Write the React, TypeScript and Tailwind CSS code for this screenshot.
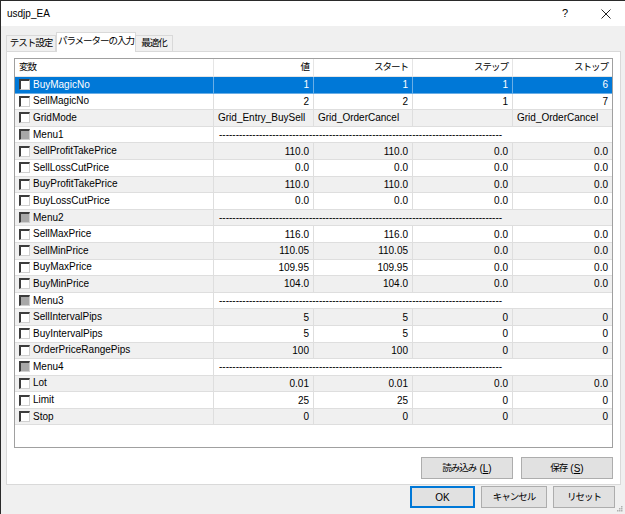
import React from "react";

type Row = {
  name: string;
  vals?: string[];
  menu?: boolean;
  text?: boolean;
};

const rows: Row[] = [
  { name: "BuyMagicNo", vals: ["1", "1", "1", "6"] },
  { name: "SellMagicNo", vals: ["2", "2", "1", "7"] },
  { name: "GridMode", vals: ["Grid_Entry_BuySell", "Grid_OrderCancel", "", "Grid_OrderCancel"], text: true },
  { name: "Menu1", menu: true },
  { name: "SellProfitTakePrice", vals: ["110.0", "110.0", "0.0", "0.0"] },
  { name: "SellLossCutPrice", vals: ["0.0", "0.0", "0.0", "0.0"] },
  { name: "BuyProfitTakePrice", vals: ["110.0", "110.0", "0.0", "0.0"] },
  { name: "BuyLossCutPrice", vals: ["0.0", "0.0", "0.0", "0.0"] },
  { name: "Menu2", menu: true },
  { name: "SellMaxPrice", vals: ["116.0", "116.0", "0.0", "0.0"] },
  { name: "SellMinPrice", vals: ["110.05", "110.05", "0.0", "0.0"] },
  { name: "BuyMaxPrice", vals: ["109.95", "109.95", "0.0", "0.0"] },
  { name: "BuyMinPrice", vals: ["104.0", "104.0", "0.0", "0.0"] },
  { name: "Menu3", menu: true },
  { name: "SellIntervalPips", vals: ["5", "5", "0", "0"] },
  { name: "BuyIntervalPips", vals: ["5", "5", "0", "0"] },
  { name: "OrderPriceRangePips", vals: ["100", "100", "0", "0"] },
  { name: "Menu4", menu: true },
  { name: "Lot", vals: ["0.01", "0.01", "0.0", "0.0"] },
  { name: "Limit", vals: ["25", "25", "0", "0"] },
  { name: "Stop", vals: ["0", "0", "0", "0"] },
];

const DASHES = "-".repeat(85);

function Check({ menu }: { menu?: boolean }) {
  return (
    <div
      className={
        "w-[11px] h-[11px] shrink-0 box-border border-t-2 border-l-2 border-t-[#3c3c3c] border-l-[#3c3c3c] border-b border-r border-b-[#d0d0d0] border-r-[#d0d0d0] " +
        (menu ? "bg-[#a8a8a8]" : "bg-white")
      }
    />
  );
}

function Jp({ children }: { children: React.ReactNode }) {
  return <span className="text-[9.5px] tracking-[-1px]">{children}</span>;
}

function Btn({ children, w, def }: { children: React.ReactNode; w: string; def?: boolean }) {
  return (
    <div
      className={
        "h-[22px] flex items-center justify-center bg-[#e1e1e1] box-border " +
        w +
        (def ? " border-2 border-[#0078d7]" : " border border-[#adadad]")
      }
    >
      {children}
    </div>
  );
}

export default function App() {
  return (
    <div
      className="w-[625px] h-[514px] bg-[#2a2a2a] overflow-hidden text-black"
      style={{ fontFamily: '"Liberation Sans", "Noto Sans CJK JP", sans-serif' }}
    >
      <div className="ml-[1px] mt-[1px] w-[624px] h-[513px] bg-[#f0f0f0] flex flex-col text-[10px]">
        {/* title bar */}
        <div className="h-[25px] bg-white flex items-center shrink-0">
          <span className="ml-[6px] text-[10px]">usdjp_EA</span>
          <span className="ml-auto text-[11px] mr-[33px]">?</span>
          <svg width="10" height="10" viewBox="0 0 10 10" className="mr-[14px]">
            <path d="M0.5 0.5 L9.5 9.5 M9.5 0.5 L0.5 9.5" stroke="#222" strokeWidth="1" />
          </svg>
        </div>

        {/* tabs */}
        <div className="flex items-end pl-[5px] mt-[6px] h-[19px] shrink-0 relative z-10">
          <div className="h-[16px] w-[50px] border border-b-0 border-[#d9d9d9] bg-[#f0f0f0] flex items-center justify-center">
            <Jp>テスト設定</Jp>
          </div>
          <div className="h-[20px] w-[80px] -mb-px border border-b-0 border-[#d9d9d9] bg-white flex items-center justify-center pb-[2px]">
            <Jp>パラメーターの入力</Jp>
          </div>
          <div className="h-[16px] w-[37px] border border-b-0 border-l-0 border-[#d9d9d9] bg-[#f0f0f0] flex items-center justify-center">
            <Jp>最適化</Jp>
          </div>
        </div>

        {/* panel */}
        <div className="ml-[5px] w-[615px] h-[434px] bg-white border border-[#d9d9d9] box-border pt-[6px] pl-[7px] flex flex-col">
          <div className="w-[599px] h-[390px] border border-[#a0a0a0] box-border bg-white overflow-hidden">
            {/* header */}
            <div className="grid grid-cols-[198px_100px_99px_100px_100px] h-[18px] border-b border-[#e5e5e5] box-border">
              <div className="flex items-center pl-[4px]">
                <Jp>変数</Jp>
              </div>
              {["値", "スタート", "ステップ", "ストップ"].map((h) => (
                <div key={h} className="flex items-center justify-end pr-[4px] border-l border-[#e5e5e5]">
                  <Jp>{h}</Jp>
                </div>
              ))}
            </div>
            {rows.map((r, i) => {
              const sel = i === 0;
              const gray = i % 2 === 0;
              const bg = sel ? "bg-[#0078d7] text-white" : gray ? "bg-[#f0f0f0]" : "bg-white";
              const line = sel ? "border-[#6aaee6]" : "border-[#dedede]";
              return (
                <div
                  key={r.name}
                  className={"grid grid-cols-[198px_100px_99px_100px_100px] h-[16.6px] box-border border-b " + line + " " + bg}
                >
                  <div className="flex items-center pl-[4px] gap-[3px]">
                    <Check menu={r.menu} />
                    <span className="leading-none">{r.name}</span>
                  </div>
                  {r.menu ? (
                    <div className={"col-span-4 flex items-center pl-[5px] border-l whitespace-nowrap overflow-hidden " + line}>
                      {DASHES}
                    </div>
                  ) : (
                    r.vals!.map((v, k) => (
                      <div
                        key={k}
                        className={
                          "flex items-center border-l whitespace-nowrap " +
                          line +
                          (r.text ? " pl-[4px]" : " justify-end pr-[4px]")
                        }
                      >
                        {v}
                      </div>
                    ))
                  )}
                </div>
              );
            })}
          </div>
          <div className="flex justify-end gap-[8px] mt-[9px] mr-[7px]">
            <Btn w="w-[92px]">
              <Jp>読み込み</Jp>
              <span className="ml-[3px]">
                (<span className="underline">L</span>)
              </span>
            </Btn>
            <Btn w="w-[92px]">
              <Jp>保存</Jp>
              <span className="ml-[3px]">
                (<span className="underline">S</span>)
              </span>
            </Btn>
          </div>
        </div>

        {/* bottom buttons */}
        <div className="flex justify-end gap-[6px] mt-[1px] mr-[10px] relative">
          <Btn w="w-[65px]" def>
            OK
          </Btn>
          <Btn w="w-[66px]">
            <Jp>キャンセル</Jp>
          </Btn>
          <Btn w="w-[62px]">
            <Jp>リセット</Jp>
          </Btn>
          <svg width="6" height="6" viewBox="0 0 6 6" className="absolute right-[-8px] top-[20px]">
            <rect x="4" y="0" width="1.5" height="1.5" fill="#b0b0b0" />
            <rect x="2" y="2" width="1.5" height="1.5" fill="#b0b0b0" />
            <rect x="4" y="2" width="1.5" height="1.5" fill="#b0b0b0" />
            <rect x="0" y="4" width="1.5" height="1.5" fill="#b0b0b0" />
            <rect x="2" y="4" width="1.5" height="1.5" fill="#b0b0b0" />
            <rect x="4" y="4" width="1.5" height="1.5" fill="#b0b0b0" />
          </svg>
        </div>
      </div>
    </div>
  );
}
